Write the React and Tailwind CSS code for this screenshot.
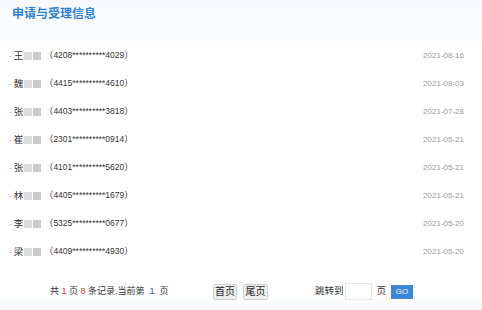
import React from "react";

const rows = [
  ["王", "4208**********4029", "2021-08-16"],
  ["魏", "4415**********4610", "2021-08-03"],
  ["张", "4403**********3818", "2021-07-28"],
  ["崔", "2301**********0914", "2021-05-21"],
  ["张", "4101**********5620", "2021-05-21"],
  ["林", "4405**********1679", "2021-05-21"],
  ["李", "5325**********0677", "2021-05-20"],
  ["梁", "4409**********4930", "2021-05-20"],
];

const font = { fontFamily: '"Liberation Sans", "Noto Sans CJK SC", sans-serif' };

export default function App() {
  return (
    <div className="w-[482px] h-[310px] overflow-hidden bg-white relative" style={font}>
      <div className="h-[42px] bg-gradient-to-b from-[#f6fafe] to-[#fcfdff] pl-[12px] pt-[6px]">
        <h1 className="text-[12px] leading-[16px] font-bold text-[#2f7fd3]">申请与受理信息</h1>
      </div>
      <div>
        {rows.map(([n, id, d], i) => (
          <div key={i} className="h-[28px] flex items-center justify-between pl-[9px] pr-[18px] text-[8.5px] text-[#333]">
            <div className="flex items-center">
              <span className="text-[#888] mr-[2px]">·</span>
              <span className="text-[9.5px]">{n}</span>
              <span className="flex items-center w-[19px] h-[10px] gap-[1px] ml-[1px]">
                <span className="w-[8px] h-[8px] bg-[#dcdcdc] blur-[0.6px]"></span>
                <span className="w-[8px] h-[8px] bg-[#cacaca] blur-[0.6px]"></span>
              </span>
              <span className="ml-[1px]"><span className="text-[9px]">（</span>{id}<span className="text-[9px]">）</span></span>
            </div>
            <span className="text-[#999] text-[8px]">{d}</span>
          </div>
        ))}
      </div>
      <div className="relative h-[44px] text-[9px] text-[#333]">
        <div className="absolute inset-x-0 bottom-0 h-[12px] bg-gradient-to-t from-[#f1f3f6] to-white opacity-80"></div>
        <div className="relative flex items-center w-full pt-[17px]">
          <div className="ml-[50px] w-[163px] flex items-center">
            共&nbsp;<span className="text-[#e32b2b]">1</span>&nbsp;页&nbsp;<span className="text-[#e32b2b]">8</span>&nbsp;条记录,当前第&nbsp;&nbsp;<span className="text-[#2453d9]">1</span>&nbsp;&nbsp;页
          </div>
          <button className="h-[16px] w-[24px] text-[10px] leading-[14px] bg-[#f0f0f0] border border-[#cfcfcf] rounded-[2px] text-[#222]">首页</button>
          <button className="ml-[6px] h-[16px] w-[25px] text-[10px] leading-[14px] bg-[#f0f0f0] border border-[#cfcfcf] rounded-[2px] text-[#222]">尾页</button>
          <span className="ml-[47px] text-[9.5px]">跳转到</span>
          <span className="ml-[1px] w-[27px] h-[17px] border border-[#e6e6e6] bg-white"></span>
          <span className="ml-[5px] text-[9.5px]">页</span>
          <button className="ml-[5px] w-[22px] h-[14px] bg-[#3a86d8] text-white text-[8px] leading-[14px]">GO</button>
        </div>
      </div>
    </div>
  );
}
